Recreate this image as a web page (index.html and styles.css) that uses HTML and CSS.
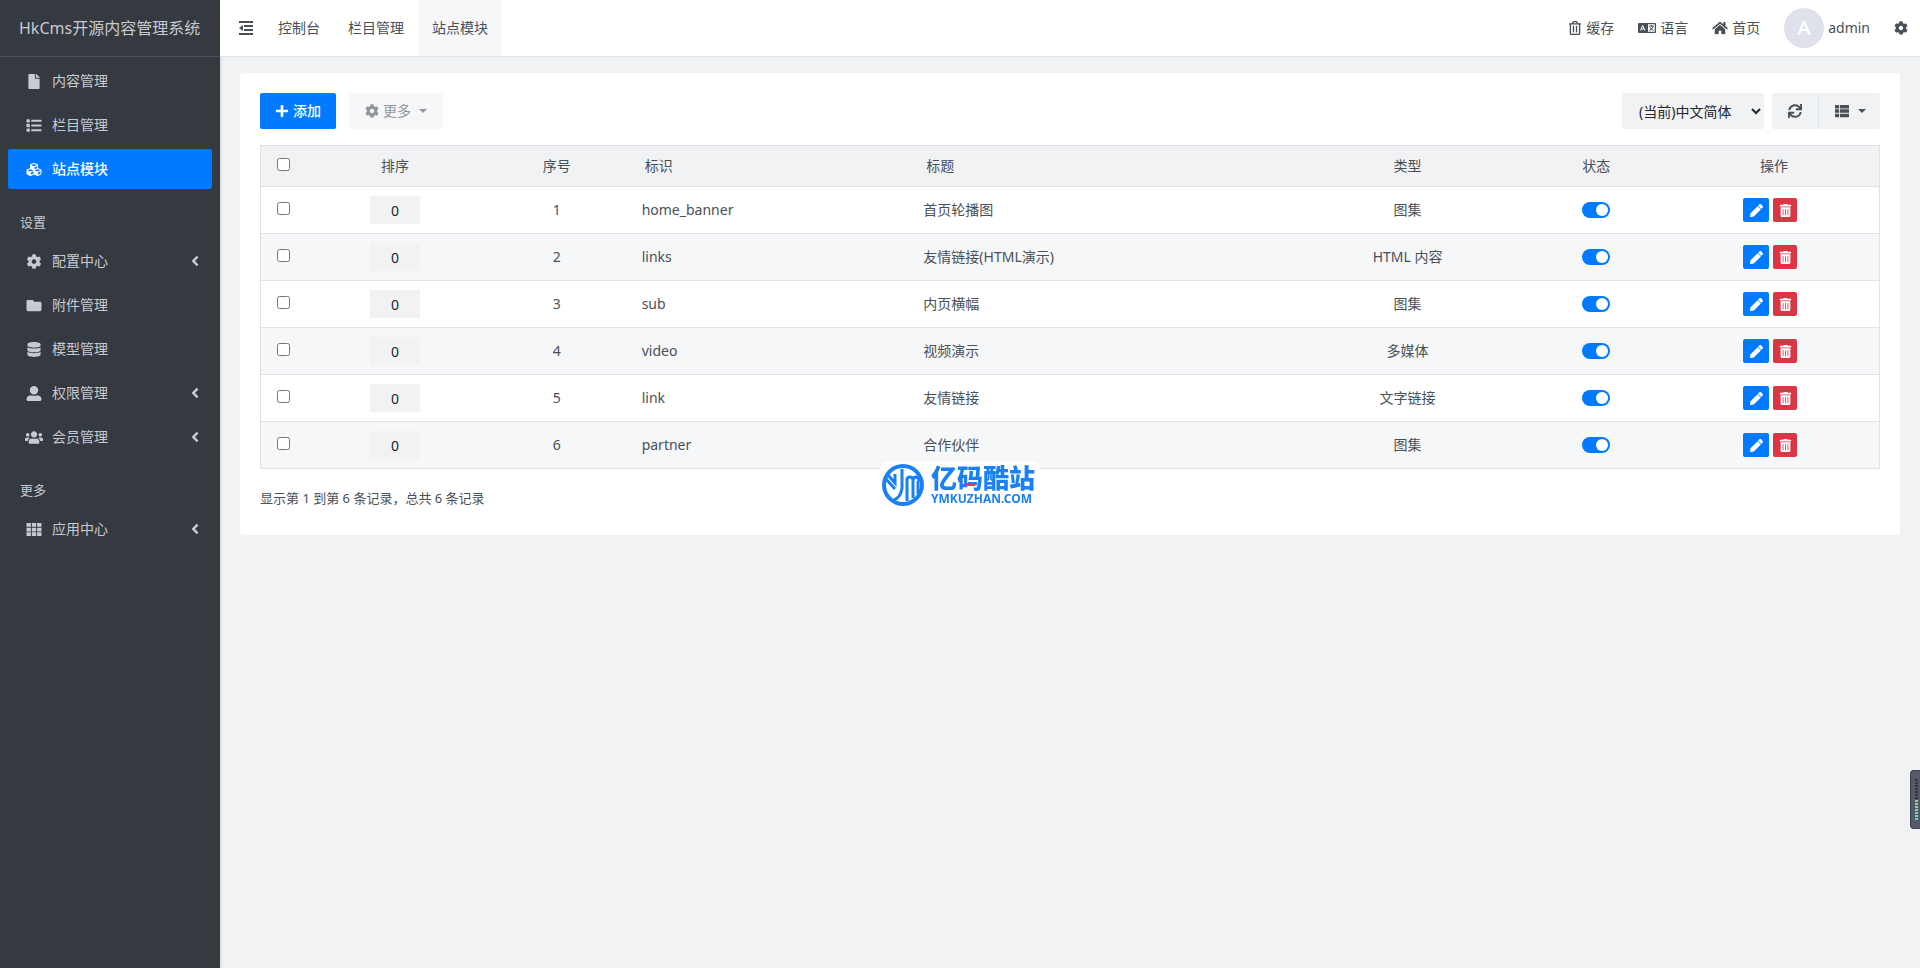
FILE: index.html
```html
<!DOCTYPE html>
<html lang="zh-CN">
<head>
<meta charset="utf-8">
<title>HkCms开源内容管理系统</title>
<link rel="stylesheet" href="styles.css">
</head>
<body>
<svg class="sprite" aria-hidden="true">
  <symbol id="i-file" viewBox="0 0 384 512"><path d="M224 136V0H24C10.700 0 0 10.700 0 24v464c0 13.300 10.700 24 24 24h336c13.300 0 24-10.700 24-24V160H248c-13.200 0-24-10.800-24-24zm160-14.100v6.100H256V0h6.100c6.400 0 12.500 2.500 17 7l97.900 98c4.500 4.500 7 10.600 7 16.900z"/></symbol>
  <symbol id="i-list" viewBox="0 0 512 512"><rect y="40" width="112" height="112" rx="16"/><rect y="200" width="112" height="112" rx="16"/><rect y="360" width="112" height="112" rx="16"/><rect x="160" y="60" width="352" height="72" rx="16"/><rect x="160" y="220" width="352" height="72" rx="16"/><rect x="160" y="380" width="352" height="72" rx="16"/></symbol>
  <symbol id="i-cubes" viewBox="0 0 512 512"><path d="M488.600 250.200L392 214V105.500c0-15-9.300-28.400-23.400-33.700l-100-37.500c-8.100-3.100-17.100-3.100-25.300 0l-100 37.500c-14.100 5.300-23.400 18.700-23.400 33.700V214l-96.600 36.200C9.300 255.500 0 268.900 0 283.900V394c0 13.600 7.700 26.100 19.900 32.200l100 50c10.100 5.100 22.100 5.100 32.200 0l103.900-52 103.900 52c10.100 5.100 22.100 5.100 32.200 0l100-50c12.200-6.100 19.900-18.600 19.900-32.200V283.900c0-15-9.300-28.400-23.400-33.700zM358 214.800l-85 31.900v-68.200l85-37v73.300zM154 104.100l102-38.200 102 38.200v.6l-102 41.400-102-41.400v-.6zm84 291.100l-85 42.500v-79.100l85-38.800v75.400zm0-112l-102 41.400-102-41.400v-.6l102-38.200 102 38.200v.6zm240 112l-85 42.500v-79.100l85-38.800v75.400zm0-112l-102 41.400-102-41.400v-.6l102-38.200 102 38.200v.6z"/></symbol>
  <symbol id="i-cog" viewBox="0 0 512 512"><path d="M487.400 315.700l-42.600-24.600c4.300-23.200 4.300-47 0-70.200l42.600-24.600c4.900-2.800 7.100-8.600 5.500-14-11.100-35.600-30-67.800-54.700-94.600-3.800-4.100-10-5.100-14.800-2.300L380.800 110c-17.900-15.400-38.500-27.300-60.800-35.100V25.800c0-5.600-3.900-10.500-9.400-11.700-36.700-8.200-74.300-7.800-109.200 0-5.500 1.200-9.400 6.100-9.400 11.700V75c-22.200 7.900-42.800 19.800-60.800 35.100L88.700 85.500c-4.900-2.800-11-1.900-14.800 2.300-24.700 26.700-43.600 58.900-54.700 94.600-1.700 5.400.6 11.200 5.500 14L67.300 221c-4.300 23.200-4.300 47 0 70.200l-42.600 24.600c-4.900 2.800-7.100 8.600-5.500 14 11.100 35.600 30 67.800 54.700 94.600 3.800 4.100 10 5.100 14.800 2.300l42.600-24.600c17.900 15.400 38.500 27.300 60.800 35.100v49.200c0 5.600 3.900 10.500 9.400 11.700 36.700 8.200 74.300 7.800 109.200 0 5.500-1.200 9.400-6.100 9.400-11.700v-49.200c22.200-7.900 42.800-19.800 60.800-35.100l42.600 24.600c4.900 2.800 11 1.900 14.800-2.300 24.700-26.700 43.600-58.900 54.700-94.600 1.500-5.500-.7-11.300-5.600-14.100zM256 336c-44.100 0-80-35.900-80-80s35.900-80 80-80 80 35.900 80 80-35.900 80-80 80z"/></symbol>
  <symbol id="i-folder" viewBox="0 0 512 512"><path d="M464 128H272l-64-64H48C21.490 64 0 85.490 0 112v288c0 26.510 21.490 48 48 48h416c26.510 0 48-21.490 48-48V176c0-26.510-21.490-48-48-48z"/></symbol>
  <symbol id="i-database" viewBox="0 0 448 512"><path d="M448 73.143v45.714C448 159.143 347.667 192 224 192S0 159.143 0 118.857V73.143C0 32.857 100.333 0 224 0s224 32.857 224 73.143zM448 176v102.857C448 319.143 347.667 352 224 352S0 319.143 0 278.857V176c48.125 33.143 136.208 48.572 224 48.572S399.874 209.143 448 176zm0 160v102.857C448 479.143 347.667 512 224 512S0 479.143 0 438.857V336c48.125 33.143 136.208 48.572 224 48.572S399.874 369.143 448 336z"/></symbol>
  <symbol id="i-user" viewBox="0 0 512 512"><path d="M256 288c79.500 0 144-64.500 144-144S335.500 0 256 0 112 64.500 112 144s64.500 144 144 144zm128 32h-55.100c-22.200 10.200-46.900 16-72.900 16s-50.600-5.800-72.900-16H128C57.300 320 0 377.300 0 448v16c0 26.500 21.500 48 48 48h416c26.500 0 48-21.500 48-48v-16c0-70.700-57.300-128-128-128z"/></symbol>
  <symbol id="i-users" viewBox="0 0 640 512"><path d="M96 224c35.300 0 64-28.700 64-64s-28.700-64-64-64-64 28.700-64 64 28.700 64 64 64zm448 0c35.300 0 64-28.700 64-64s-28.700-64-64-64-64 28.700-64 64 28.700 64 64 64zm32 32h-64c-17.600 0-33.500 7.100-45.100 18.600 40.300 22.100 68.900 62 75.100 109.400h66c17.700 0 32-14.300 32-32v-32c0-35.300-28.700-64-64-64zm-256 0c61.900 0 112-50.100 112-112S381.900 32 320 32 208 82.100 208 144s50.100 112 112 112zm76.800 32h-8.300c-20.800 10-43.900 16-68.500 16s-47.600-6-68.500-16h-8.300C179.600 288 128 339.600 128 403.200V432c0 26.500 21.500 48 48 48h288c26.500 0 48-21.500 48-48v-28.800c0-63.600-51.600-115.200-115.200-115.200zm-223.700-13.400C161.500 263.100 145.600 256 128 256H64c-35.300 0-64 28.700-64 64v32c0 17.700 14.300 32 32 32h65.900c6.300-47.400 34.900-87.300 75.200-109.400z"/></symbol>
  <symbol id="i-th" viewBox="0 0 512 512"><path d="M16 32h134v132H0V48q0-16 16-16zM182 32h148v132H182zM362 32h134q16 0 16 16v116H362zM0 192h150v132H0zM182 192h148v132H182zM362 192h150v132H362zM0 352h150v128H16q-16 0-16-16zM182 352h148v128H182zM362 352h150v112q0 16-16 16H362z"/></symbol>
  <symbol id="i-left" viewBox="0 0 256 512"><path d="M31.700 239l136-136c9.400-9.400 24.600-9.400 33.900 0l22.600 22.600c9.400 9.400 9.400 24.600 0 33.900L127.900 256l96.400 96.400c9.400 9.400 9.400 24.600 0 33.900L201.700 409c-9.400 9.400-24.600 9.400-33.900 0l-136-136c-9.500-9.400-9.500-24.600-.1-34z"/></symbol>
  <symbol id="i-outdent" viewBox="0 0 14 14"><path d="M0 0h14v2H0zM5 4h9v2H5zM5 8h9v2H5zM0 12h14v2H0zM0 7l4-3v6z"/></symbol>
  <symbol id="i-trash-o" viewBox="0 0 448 512"><path d="M268 416h24a12 12 0 0 0 12-12V188a12 12 0 0 0-12-12h-24a12 12 0 0 0-12 12v216a12 12 0 0 0 12 12zM432 80h-82.410l-34-56.700A48 48 0 0 0 274.410 0H173.590a48 48 0 0 0-41.160 23.300L98.410 80H16A16 16 0 0 0 0 96v16a16 16 0 0 0 16 16h16v336a48 48 0 0 0 48 48h288a48 48 0 0 0 48-48V128h16a16 16 0 0 0 16-16V96a16 16 0 0 0-16-16zM171.840 50.910A6 6 0 0 1 177 48h94a6 6 0 0 1 5.150 2.910L293.610 80H154.390zM368 464H80V128h288zm-212-48h24a12 12 0 0 0 12-12V188a12 12 0 0 0-12-12h-24a12 12 0 0 0-12 12v216a12 12 0 0 0 12 12z"/></symbol>
  <symbol id="i-lang" viewBox="0 0 18 10"><path fill-rule="evenodd" d="M1 0h16q1 0 1 1v8q0 1-1 1H1Q0 10 0 9V1Q0 0 1 0zM10 1.200v7.600h6.800V1.200z"/><path class="knock" d="M2.500 7.500L4.700 2.500l2.200 5M3.300 6h2.800"/><path class="stroke" d="M11 3.200h5M13.500 2v1.200M15 3.500q-.8 2.800-3.700 4M12 4.500q1 2 3.700 3"/></symbol>
  <symbol id="i-home" viewBox="0 0 576 512"><path d="M280.370 148.260L96 300.110V464a16 16 0 0 0 16 16l112.060-.29a16 16 0 0 0 15.920-16V368a16 16 0 0 1 16-16h64a16 16 0 0 1 16 16v95.640a16 16 0 0 0 16 16.050L464 480a16 16 0 0 0 16-16V300L295.670 148.260a12.190 12.190 0 0 0-15.300 0zM571.600 251.470L488 182.560V44.050a12 12 0 0 0-12-12h-56a12 12 0 0 0-12 12v72.610L318.470 43a48 48 0 0 0-61 0L4.340 251.470a12 12 0 0 0-1.600 16.900l25.500 31A12 12 0 0 0 45.150 301l235.220-193.740a12.190 12.190 0 0 1 15.300 0L530.900 301a12 12 0 0 0 16.900-1.600l25.500-31a12 12 0 0 0-1.700-16.930z"/></symbol>
  <symbol id="i-plus" viewBox="0 0 448 512"><path d="M416 208H272V64c0-17.670-14.330-32-32-32h-32c-17.670 0-32 14.330-32 32v144H32c-17.670 0-32 14.330-32 32v32c0 17.670 14.330 32 32 32h144v144c0 17.670 14.330 32 32 32h32c17.670 0 32-14.330 32-32V304h144c17.670 0 32-14.330 32-32v-32c0-17.670-14.330-32-32-32z"/></symbol>
  <symbol id="i-sync" viewBox="0 0 512 512"><path d="M440.650 12.570l4 82.770A247.160 247.160 0 0 0 255.830 8C134.730 8 33.910 94.920 12.290 209.820A12 12 0 0 0 24.090 224h49.050a12 12 0 0 0 11.670-9.260 175.910 175.910 0 0 1 317-56.940l-101.460-4.860a12 12 0 0 0-12.570 12v47.410a12 12 0 0 0 12 12H500a12 12 0 0 0 12-12V12a12 12 0 0 0-12-12h-47.370a12 12 0 0 0-11.980 12.570zM255.830 432a175.610 175.610 0 0 1-146-77.800l101.800 4.870a12 12 0 0 0 12.570-12v-47.400a12 12 0 0 0-12-12H12a12 12 0 0 0-12 12V500a12 12 0 0 0 12 12h47.350a12 12 0 0 0 12-12.600l-4.150-82.570A247.170 247.170 0 0 0 255.830 504c121.110 0 221.930-86.920 243.550-201.820a12 12 0 0 0-11.800-14.180h-49.050a12 12 0 0 0-11.670 9.260A175.860 175.860 0 0 1 255.830 432z"/></symbol>
  <symbol id="i-thlist" viewBox="0 0 512 512"><path d="M20 32h130v132H0V52q0-20 20-20zM182 32h310q20 0 20 20v112H182zM0 192h150v128H0zM182 192h330v128H182zM0 352h150v128H20q-20 0-20-20zM182 352h330v108q0 20-20 20H182z"/></symbol>
  <symbol id="i-pencil" viewBox="0 0 512 512"><path d="M497.900 142.100l-46.100 46.100c-4.700 4.700-12.300 4.700-17 0l-111-111c-4.700-4.700-4.700-12.300 0-17l46.100-46.100c18.700-18.700 49.100-18.700 67.900 0l60.100 60.100c18.800 18.700 18.800 49.100 0 67.900zM300 84L21.600 362.400.4 483.900c-2.900 16.400 11.400 30.600 27.800 27.800l121.500-21.300L428 212z"/></symbol>
  <symbol id="i-trash" viewBox="0 0 448 512"><path d="M32 464a48 48 0 0 0 48 48h288a48 48 0 0 0 48-48V128H32zm272-256a16 16 0 0 1 32 0v224a16 16 0 0 1-32 0zm-96 0a16 16 0 0 1 32 0v224a16 16 0 0 1-32 0zm-96 0a16 16 0 0 1 32 0v224a16 16 0 0 1-32 0zM432 32H312l-9.400-18.700A24 24 0 0 0 281.100 0H166.800a23.720 23.720 0 0 0-21.400 13.300L136 32H16A16 16 0 0 0 0 48v32a16 16 0 0 0 16 16h416a16 16 0 0 0 16-16V48a16 16 0 0 0-16-16z"/></symbol>
</svg>

<div class="layout">
  <aside class="sidebar">
    <a class="brand" href="#">HkCms开源内容管理系统</a>
    <nav class="menu">
      <a class="item" href="#"><svg class="icon"><use href="#i-file"/></svg><span>内容管理</span></a>
      <a class="item" href="#"><svg class="icon"><use href="#i-list"/></svg><span>栏目管理</span></a>
      <a class="item active" href="#"><svg class="icon"><use href="#i-cubes"/></svg><span>站点模块</span></a>
      <div class="group">设置</div>
      <a class="item" href="#"><svg class="icon"><use href="#i-cog"/></svg><span>配置中心</span><svg class="arrow"><use href="#i-left"/></svg></a>
      <a class="item" href="#"><svg class="icon"><use href="#i-folder"/></svg><span>附件管理</span></a>
      <a class="item" href="#"><svg class="icon"><use href="#i-database"/></svg><span>模型管理</span></a>
      <a class="item" href="#"><svg class="icon"><use href="#i-user"/></svg><span>权限管理</span><svg class="arrow"><use href="#i-left"/></svg></a>
      <a class="item" href="#"><svg class="icon"><use href="#i-users"/></svg><span>会员管理</span><svg class="arrow"><use href="#i-left"/></svg></a>
      <div class="group">更多</div>
      <a class="item" href="#"><svg class="icon"><use href="#i-th"/></svg><span>应用中心</span><svg class="arrow"><use href="#i-left"/></svg></a>
    </nav>
  </aside>

  <div class="page">
    <header class="topbar">
      <button class="toggle" type="button" aria-label="收起菜单"><svg class="icon-s"><use href="#i-outdent"/></svg></button>
      <nav class="tabs">
        <a href="#">控制台</a>
        <a href="#">栏目管理</a>
        <a class="current" href="#">站点模块</a>
      </nav>
      <nav class="tools">
        <a href="#"><svg class="icon-s"><use href="#i-trash-o"/></svg>缓存</a>
        <a href="#"><svg class="icon-w"><use href="#i-lang"/></svg>语言</a>
        <a href="#"><svg class="icon-m"><use href="#i-home"/></svg>首页</a>
        <a href="#"><span class="avatar">A</span>admin</a>
        <a href="#" aria-label="设置"><svg class="icon-s"><use href="#i-cog"/></svg></a>
      </nav>
    </header>

    <main class="card">
      <div class="toolbar">
        <button class="btn primary" type="button"><svg class="icon-s"><use href="#i-plus"/></svg>添加</button>
        <button class="btn muted" type="button" disabled><svg class="icon-s"><use href="#i-cog"/></svg>更多<i class="caret"></i></button>
        <select class="lang" aria-label="语言"><option>(当前)中文简体</option></select>
        <div class="btn-group">
          <button class="btn" type="button" aria-label="刷新"><svg class="icon-m"><use href="#i-sync"/></svg></button>
          <button class="btn" type="button" aria-label="列"><svg class="icon-m"><use href="#i-thlist"/></svg><i class="caret"></i></button>
        </div>
      </div>

      <table class="grid">
        <colgroup><col class="c-check"><col class="c-sort"><col class="c-no"><col class="c-key"><col class="c-title"><col class="c-type"><col class="c-state"><col class="c-ops"></colgroup>
        <thead>
          <tr><th><input type="checkbox" aria-label="全选"></th><th>排序</th><th>序号</th><th class="left">标识</th><th class="left">标题</th><th>类型</th><th>状态</th><th>操作</th></tr>
        </thead>
        <tbody>
          <tr><td><input type="checkbox" aria-label="选择 1"></td><td><input class="sort" type="text" value="0" aria-label="排序 1"></td><td>1</td><td class="left">home_banner</td><td class="left">首页轮播图</td><td>图集</td><td><input class="switch" type="checkbox" checked aria-label="状态 1"></td><td><div class="ops"><button class="op edit" type="button" aria-label="编辑"><svg><use href="#i-pencil"/></svg></button><button class="op del" type="button" aria-label="删除"><svg><use href="#i-trash"/></svg></button></div></td></tr>
          <tr><td><input type="checkbox" aria-label="选择 2"></td><td><input class="sort" type="text" value="0" aria-label="排序 2"></td><td>2</td><td class="left">links</td><td class="left">友情链接(HTML演示)</td><td>HTML 内容</td><td><input class="switch" type="checkbox" checked aria-label="状态 2"></td><td><div class="ops"><button class="op edit" type="button" aria-label="编辑"><svg><use href="#i-pencil"/></svg></button><button class="op del" type="button" aria-label="删除"><svg><use href="#i-trash"/></svg></button></div></td></tr>
          <tr><td><input type="checkbox" aria-label="选择 3"></td><td><input class="sort" type="text" value="0" aria-label="排序 3"></td><td>3</td><td class="left">sub</td><td class="left">内页横幅</td><td>图集</td><td><input class="switch" type="checkbox" checked aria-label="状态 3"></td><td><div class="ops"><button class="op edit" type="button" aria-label="编辑"><svg><use href="#i-pencil"/></svg></button><button class="op del" type="button" aria-label="删除"><svg><use href="#i-trash"/></svg></button></div></td></tr>
          <tr><td><input type="checkbox" aria-label="选择 4"></td><td><input class="sort" type="text" value="0" aria-label="排序 4"></td><td>4</td><td class="left">video</td><td class="left">视频演示</td><td>多媒体</td><td><input class="switch" type="checkbox" checked aria-label="状态 4"></td><td><div class="ops"><button class="op edit" type="button" aria-label="编辑"><svg><use href="#i-pencil"/></svg></button><button class="op del" type="button" aria-label="删除"><svg><use href="#i-trash"/></svg></button></div></td></tr>
          <tr><td><input type="checkbox" aria-label="选择 5"></td><td><input class="sort" type="text" value="0" aria-label="排序 5"></td><td>5</td><td class="left">link</td><td class="left">友情链接</td><td>文字链接</td><td><input class="switch" type="checkbox" checked aria-label="状态 5"></td><td><div class="ops"><button class="op edit" type="button" aria-label="编辑"><svg><use href="#i-pencil"/></svg></button><button class="op del" type="button" aria-label="删除"><svg><use href="#i-trash"/></svg></button></div></td></tr>
          <tr><td><input type="checkbox" aria-label="选择 6"></td><td><input class="sort" type="text" value="0" aria-label="排序 6"></td><td>6</td><td class="left">partner</td><td class="left">合作伙伴</td><td>图集</td><td><input class="switch" type="checkbox" checked aria-label="状态 6"></td><td><div class="ops"><button class="op edit" type="button" aria-label="编辑"><svg><use href="#i-pencil"/></svg></button><button class="op del" type="button" aria-label="删除"><svg><use href="#i-trash"/></svg></button></div></td></tr>
        </tbody>
      </table>
      <p class="summary">显示第 1 到第 6 条记录，总共 6 条记录</p>
    </main>
  </div>
</div>

<div class="watermark">
  <svg class="mark" viewBox="0 0 42 42"><circle cx="21" cy="21" r="21" fill="#1a80f5"/><circle cx="21" cy="21" r="17" fill="#fff"/><path d="M4 15l9 10M6 11l7 8v-9M20 5v19q-1 9-8 12M25 37V16M31 34V15M36 30V17" fill="none" stroke="#1a80f5" stroke-width="3"/><path d="M25 16q0-3 3-3t3 3q0-3 3-3t3 4" fill="none" stroke="#1a80f5" stroke-width="3"/></svg>
  <div class="mark-text"><span class="mark-name">亿码酷站</span><span class="mark-url">YMKUZHAN.COM</span></div>
  <i class="dash"></i>
</div>
<div class="meter"><i class="scale"></i></div>
</body>
</html>
```
FILE: styles.css
```css
* { box-sizing: border-box; }
body {
  margin: 0;
  background: #f0f2f4;
  color: #495057;
  font: 14px/20px "Noto Sans", "Noto Sans CJK SC", sans-serif;
}
a { color: inherit; text-decoration: none; }
button, input, select { font: inherit; color: inherit; margin: 0; }
svg { fill: currentColor; flex: none; }
.sprite { position: absolute; width: 0; height: 0; }
.icon-s { width: 14px; height: 14px; }
.icon-m { width: 16px; height: 14px; }
.icon-w { width: 18px; height: 10px; }
.knock { fill: none; stroke: #fff; }
.stroke { fill: none; stroke: #495057; }

.layout { display: flex; min-height: 100vh; }
.sidebar {
  flex: none;
  width: 220px;
  background: #353940;
  color: #c7cad1;
  box-shadow: 0 0 4px rgba(0, 0, 0, .2);
}
.brand {
  display: flex;
  align-items: center;
  height: 57px;
  padding: 0 19px;
  border-bottom: 1px solid #4b5058;
  font-size: 16px;
  white-space: nowrap;
}
.menu { display: flex; flex-direction: column; gap: 4px; padding: 4px 8px; }
.item {
  display: flex;
  align-items: center;
  gap: 9px;
  height: 40px;
  padding: 0 12px 0 17px;
  border-radius: 2px;
}
.item .icon { width: 18px; height: 15px; }
.item .arrow { width: 10px; height: 16px; margin-left: auto; }
.item.active { background: #007bff; color: #fff; font-weight: 500; }
.group { height: 44px; padding: 19px 12px 0; font-size: 13px; }

.page { flex: 1; min-width: 0; }
.topbar {
  display: flex;
  align-items: center;
  height: 57px;
  background: #fff;
  border-bottom: 1px solid #e1e4e8;
}
.toggle { display: flex; padding: 0; margin: 0 11px 0 19px; border: 0; background: none; }
.tabs { display: flex; align-self: stretch; }
.tabs a { display: flex; align-items: center; padding: 0 14px; }
.tabs .current { background: #f6f7f9; }
.tools { display: flex; align-items: center; gap: 24px; margin-left: auto; padding-right: 12px; }
.tools a { display: flex; align-items: center; gap: 4px; }
.avatar {
  display: grid;
  place-items: center;
  width: 40px;
  height: 40px;
  border-radius: 50%;
  background: #dfe2ec;
  color: #fff;
  font-size: 20px;
  font-weight: 500;
}

.card { margin: 16px 20px; padding: 20px 20px 27px; background: #fff; border-radius: 4px; }
.toolbar { display: flex; margin-bottom: 16px; }
.btn {
  display: flex;
  align-items: center;
  justify-content: center;
  gap: 4px;
  height: 36px;
  padding: 0 15px;
  border: 0;
  border-radius: 2px;
  background: #f0f2f4;
}
.btn.primary { background: #007bff; color: #fff; font-weight: 500; }
.btn.muted { margin-left: 13px; padding: 0 16px; background: #f6f7f9; color: #92969b; }
.caret {
  margin-left: 4px;
  border: 4px solid transparent;
  border-top-color: currentColor;
  border-bottom: 0;
}
.lang {
  width: 142px;
  height: 36px;
  margin-left: auto;
  padding-left: 13px;
  border: 0;
  border-radius: 2px;
  background-color: #f0f2f4;
  color: #212529;
}
.btn-group { display: flex; margin-left: 8px; }
.btn-group .btn + .btn { padding-right: 14px; border-left: 1px solid #dfe2e6; }

.grid { width: 100%; table-layout: fixed; border-collapse: collapse; border: 1px solid #dfe2e6; }
.c-check { width: 44px; }
.c-sort { width: 11%; }
.c-no { width: 9%; }
.c-key { width: 17.4%; }
.c-title { width: 23.5%; }
.c-type { width: 14.3%; }
.c-state { width: 9%; }
.c-ops { width: 13%; }
.grid th, .grid td { padding: 0; border-bottom: 1px solid #dfe2e6; text-align: center; }
.grid th { height: 41px; background: #f0f2f4; font-weight: 400; }
.grid td { height: 47px; }
.grid tbody tr:nth-child(even) td { background: #f6f7f9; }
.grid td.left { padding-left: 12px; text-align: left; }
.grid th.left { padding-left: 15px; text-align: left; }
.grid input[type="checkbox"] { display: block; width: 13px; height: 13px; margin: 0 auto 3px; }
.grid .sort {
  display: block;
  width: 50px;
  height: 28px;
  margin: 0 auto;
  padding: 0;
  border: 0;
  background: #f0f2f4;
  color: #212529;
  text-align: center;
}
.grid .switch[type="checkbox"] {
  display: flex;
  appearance: none;
  justify-content: flex-end;
  width: 28px;
  height: 16px;
  margin: 0 auto;
  padding: 2px;
  border-radius: 8px;
  background: #007bff;
}
.switch::before { content: ""; width: 12px; height: 12px; border-radius: 50%; background: #fff; }
.ops { display: flex; justify-content: center; gap: 4px; padding-right: 8px; }
.op { display: grid; place-items: center; height: 24px; padding: 0; border: 0; border-radius: 2px; color: #fff; }
.op svg { width: 13px; height: 13px; }
.edit { width: 26px; background: #007bff; }
.del { width: 24px; background: #dc3545; }
.summary { margin: 19px 0 0; font-size: 13px; }

.watermark {
  position: fixed;
  top: 50%;
  left: 50%;
  display: flex;
  align-items: center;
  gap: 7px;
  width: 160px;
  height: 48px;
  margin: -23px 0 0 -80px;
  padding: 0 2px;
  border-radius: 8px;
  background: #fff;
  color: #1a80f5;
}
.mark { width: 42px; height: 42px; }
.mark-text { display: flex; flex-direction: column; white-space: nowrap; }
.mark-name { font-size: 26px; font-weight: 900; line-height: 28px; }
.mark-url { font-size: 12px; font-weight: 700; line-height: 14px; }
.dash { position: absolute; left: 86px; top: 22px; width: 9px; height: 3px; background: #e8384f; }

.meter {
  position: fixed;
  right: 0;
  top: 770px;
  width: 10px;
  height: 59px;
  padding: 7px 2px 7px 4px;
  border: 1px solid #3b4050;
  border-right: 0;
  border-radius: 4px 0 0 4px;
  background: #555a69;
}
.scale {
  display: block;
  height: 100%;
  background:
    repeating-linear-gradient(#555a69 0 1px, transparent 1px 3px),
    linear-gradient(#343846 0 52%, #a4cf7c 52%, #5fd3d5);
}
```
